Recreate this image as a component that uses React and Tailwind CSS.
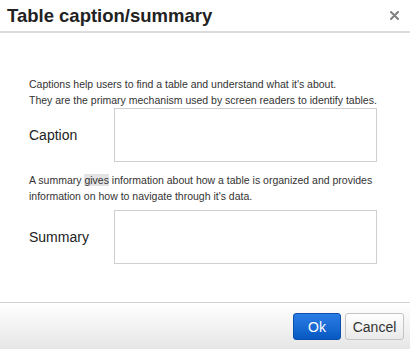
import React from 'react';

const App = () => {
  return (
    <div className="w-[410px] h-[349px] bg-white flex flex-col font-['Liberation_Sans',Arial,sans-serif] text-[#222] overflow-hidden">
      {/* Title bar */}
      <div className="h-[33px] flex items-center justify-between pl-[7px] pr-[10px] border-b-2 border-[#dcdcdc] shrink-0">
        <h1 className="text-[18.5px] font-bold text-[#222] leading-none pt-[1px]">Table caption/summary</h1>
        <button className="w-[12px] h-[12px] flex items-center justify-center text-[#808080]">
          <svg width="9" height="9" viewBox="0 0 9 9">
            <path d="M1 1 L8 8 M8 1 L1 8" stroke="currentColor" strokeWidth="2" strokeLinecap="round" />
          </svg>
        </button>
      </div>

      {/* Body */}
      <div className="flex-1 pl-[29px] pr-[32px] pt-[43px]">
        <p className="text-[10.5px] leading-[16px] text-[#333] whitespace-nowrap">
          Captions help users to find a table and understand what it's about.
          <br />
          They are the primary mechanism used by screen readers to identify tables.
        </p>
        <div className="flex items-center">
          <label className="w-[85px] text-[14px] text-[#222]">Caption</label>
          <textarea className="w-[263px] h-[54px] border border-[#cfcfcf] resize-none outline-none" />
        </div>

        <p className="text-[10.5px] leading-[16px] text-[#333] mt-[10px] whitespace-nowrap">
          A summary <span className="bg-[#e3e3e3]">gives</span> information about how a table is organized and provides
          <br />
          information on how to navigate through it's data.
        </p>
        <div className="flex items-center mt-[6px]">
          <label className="w-[85px] text-[14px] text-[#222]">Summary</label>
          <textarea className="w-[263px] h-[54px] border border-[#cfcfcf] resize-none outline-none" />
        </div>
      </div>

      {/* Footer */}
      <div className="h-[47px] shrink-0 border-t border-[#d2d2d2] bg-gradient-to-b from-[#ffffff] to-[#e6e6e6] flex items-center justify-end gap-[4px] pr-[6px] pt-[1px]">
        <button className="w-[48px] h-[27px] rounded-[3px] border border-[#0b4fa8] bg-gradient-to-b from-[#2b7de6] to-[#0559c2] text-white text-[14px] leading-none">
          Ok
        </button>
        <button className="w-[59px] h-[27px] rounded-[3px] border border-[#c4c4c4] bg-gradient-to-b from-[#ffffff] to-[#e9e9e9] text-[#333] text-[14px] leading-none">
          Cancel
        </button>
      </div>
    </div>
  );
};

export default App;
